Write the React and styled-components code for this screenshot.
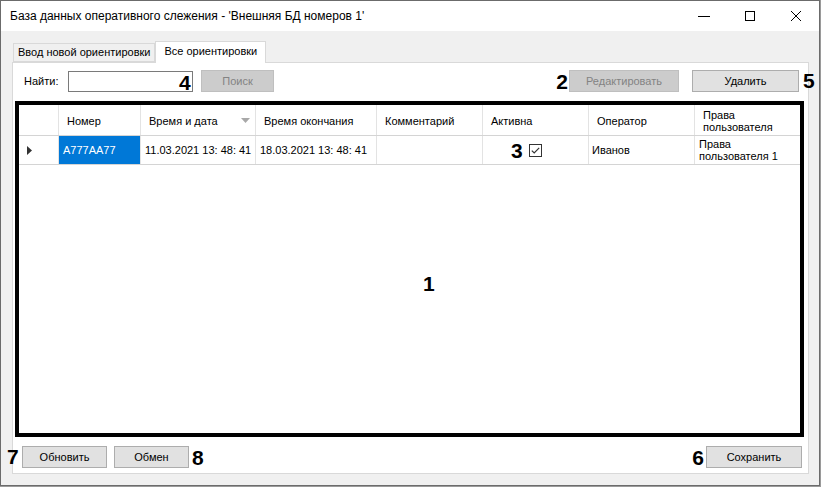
import React from "react";
import styled, { createGlobalStyle } from "styled-components";

const Global = createGlobalStyle`
  html, body { margin: 0; padding: 0; background: #9a9a9a; }
  body { font-family: "Liberation Sans", Arial, sans-serif; }
  * { box-sizing: border-box; }
`;

const Window = styled.div`
  width: 820px;
  height: 486px;
  border: 1px solid #6b6b6b;
  background: #f0f0f0;
  display: flex;
  flex-direction: column;
  position: relative;
`;

const TitleBar = styled.div`
  height: 30px;
  background: #ffffff;
  display: flex;
  align-items: center;
  padding-left: 9px;
  flex: none;
`;

const Title = styled.div`
  flex: 1;
  font-size: 12px;
  color: #000;
  margin-top: -1px;
`;

const Controls = styled.div`
  display: flex;
  height: 100%;
`;

const Ctrl = styled.div`
  width: 46px;
  height: 100%;
  display: flex;
  align-items: center;
  justify-content: center;
  padding-bottom: 1px;
`;

const Body = styled.div`
  flex: 1;
  padding: 10px 10px 11px 11px;
  display: flex;
  flex-direction: column;
`;

const TabStrip = styled.div`
  display: flex;
  align-items: flex-end;
  height: 21px;
  padding-left: 1px;
  position: relative;
  z-index: 2;
`;

const Tab = styled.div`
  height: ${(p) => (p.$active ? "22px" : "19px")};
  margin-bottom: ${(p) => (p.$active ? "-1px" : "0")};
  padding: 0 ${(p) => (p.$active ? "8px" : "4px")};
  border: 1px solid #d9d9d9;
  border-bottom: ${(p) => (p.$active ? "none" : "1px solid #d9d9d9")};
  background: ${(p) => (p.$active ? "#ffffff" : "#f0f0f0")};
  font-size: 11px;
  display: flex;
  align-items: center;
  color: #000;
  padding-bottom: ${(p) => (p.$active ? "3px" : "1px")};
`;

const Panel = styled.div`
  flex: 1;
  background: #ffffff;
  border: 1px solid #d9d9d9;
  display: flex;
  flex-direction: column;
  position: relative;
  z-index: 1;
`;

const TopRow = styled.div`
  display: flex;
  align-items: center;
  height: 22px;
  margin-top: 7px;
  padding: 0 9px 0 11px;
`;

const Label = styled.div`
  width: 44px;
  font-size: 11px;
  color: #000;
`;

const Anchor = styled.div`
  position: relative;
  display: flex;
`;

const Input = styled.div`
  width: 125px;
  height: 21px;
  border: 1px solid #7a7a7a;
  background: #fff;
`;

const Button = styled.div`
  width: ${(p) => p.$w}px;
  height: 22px;
  margin-left: ${(p) => p.$ml || 0}px;
  border: 1px solid ${(p) => (p.$disabled ? "#bfbfbf" : "#adadad")};
  background: ${(p) => (p.$disabled ? "#cccccc" : "#e1e1e1")};
  color: ${(p) => (p.$disabled ? "#838383" : "#000")};
  font-size: 11px;
  display: flex;
  align-items: center;
  justify-content: center;
`;

const Spacer = styled.div`
  flex: 1;
`;

const Num = styled.span`
  font-family: "Liberation Sans", Arial, sans-serif;
  font-weight: bold;
  font-size: 21px;
  line-height: 1;
  color: #000;
`;

const FloatNum = styled(Num)`
  position: absolute;
  top: ${(p) => p.$top}px;
  left: ${(p) => p.$left}px;
`;

const InlineNum = styled(Num)`
  margin-right: ${(p) => p.$mr || 0}px;
  margin-left: ${(p) => p.$ml || 0}px;
`;

const Grid = styled.div`
  margin: 9px 4px 0 2px;
  height: 336px;
  border: 4px solid #000;
  background: #fff;
  position: relative;
  display: flex;
  flex-direction: column;
`;

const cols = [40, 82, 115, 121, 106, 106, 106, 104];

const Row = styled.div`
  display: grid;
  grid-template-columns: ${cols.map((c) => c + "px").join(" ")};
  height: ${(p) => p.$h}px;
  border-bottom: 1px solid ${(p) => p.$line};
`;

const HeadCell = styled.div`
  border-right: 1px solid #e3e3e3;
  font-size: 11px;
  color: #000;
  display: flex;
  align-items: center;
  padding-left: 8px;
  padding-top: 2px;
  line-height: 12px;
  position: relative;
`;

const Cell = styled.div`
  border-right: 1px solid #e3e3e3;
  font-size: 11px;
  line-height: 12px;
  display: flex;
  align-items: center;
  justify-content: ${(p) => (p.$center ? "center" : "flex-start")};
  padding-left: ${(p) => (p.$center ? 0 : p.$pl ?? 4)}px;
  background: ${(p) => (p.$sel ? "#0078d7" : "#fff")};
  color: ${(p) => (p.$sel ? "#fff" : "#000")};
  position: relative;
`;

const SortArrow = styled.svg`
  position: absolute;
  right: 5px;
  top: 13px;
`;

const BottomRow = styled.div`
  display: flex;
  align-items: center;
  height: 22px;
  margin-top: 9px;
  padding: 0 6px 0 9px;
`;

const CheckBox = () => (
  <svg width="13" height="13" viewBox="0 0 13 13">
    <rect x="0.5" y="0.5" width="12" height="12" fill="#fff" stroke="#333" />
    <path d="M2.8 6.6 L5.2 9 L10.2 3.8" fill="none" stroke="#333" strokeWidth="1.2" />
  </svg>
);

export default function App() {
  return (
    <>
      <Global />
      <Window>
        <TitleBar>
          <Title>База данных оперативного слежения - 'Внешняя БД номеров 1'</Title>
          <Controls>
            <Ctrl>
              <svg width="12" height="12" viewBox="0 0 12 12">
                <path d="M0 6.5 H12" stroke="#000" strokeWidth="1" />
              </svg>
            </Ctrl>
            <Ctrl>
              <svg width="12" height="12" viewBox="0 0 12 12">
                <rect x="1.5" y="1.5" width="9" height="9" fill="none" stroke="#000" />
              </svg>
            </Ctrl>
            <Ctrl>
              <svg width="12" height="12" viewBox="0 0 12 12">
                <path d="M1 1 L11 11 M11 1 L1 11" stroke="#000" strokeWidth="1" />
              </svg>
            </Ctrl>
          </Controls>
        </TitleBar>
        <Body>
          <TabStrip>
            <Tab>Ввод новой ориентировки</Tab>
            <Tab $active>Все ориентировки</Tab>
          </TabStrip>
          <Panel>
            <TopRow>
              <Label>Найти:</Label>
              <Anchor>
                <Input />
                <FloatNum $top={1} $left={111}>4</FloatNum>
              </Anchor>
              <Button $w={73} $ml={8} $disabled>Поиск</Button>
              <Spacer />
              <InlineNum $mr={1}>2</InlineNum>
              <Button $w={110} $disabled>Редактировать</Button>
              <Anchor>
                <Button $w={107} $ml={13}>Удалить</Button>
                <FloatNum $top={0} $left={124}>5</FloatNum>
              </Anchor>
            </TopRow>
            <Grid>
              <Row $h={31} $line="#d4d4d4">
                <HeadCell />
                <HeadCell>Номер</HeadCell>
                <HeadCell>
                  Время и дата
                  <SortArrow width="9" height="5" viewBox="0 0 9 5">
                    <path d="M0 0 H9 L4.5 5 Z" fill="#a8a8a8" />
                  </SortArrow>
                </HeadCell>
                <HeadCell>Время окончания</HeadCell>
                <HeadCell>Комментарий</HeadCell>
                <HeadCell>Активна</HeadCell>
                <HeadCell>Оператор</HeadCell>
                <HeadCell style={{ borderRight: "none" }}>
                  Права
                  <br />
                  пользователя
                </HeadCell>
              </Row>
              <Row $h={29} $line="#d4d4d4">
                <Cell $pl={8}>
                  <svg width="5" height="9" viewBox="0 0 5 9">
                    <path d="M0 0 L5 4.5 L0 9 Z" fill="#333" />
                  </svg>
                </Cell>
                <Cell $sel>A777AA77</Cell>
                <Cell>11.03.2021 13: 48: 41</Cell>
                <Cell>18.03.2021 13: 48: 41</Cell>
                <Cell />
                <Cell $center>
                  <Anchor>
                    <FloatNum $top={-4} $left={-18}>3</FloatNum>
                    <CheckBox />
                  </Anchor>
                </Cell>
                <Cell $pl={3}>Иванов</Cell>
                <Cell style={{ borderRight: "none" }}>
                  Права
                  <br />
                  пользователя 1
                </Cell>
              </Row>
              <FloatNum $top={168} $left={404}>1</FloatNum>
            </Grid>
            <BottomRow>
              <Anchor>
                <FloatNum $top={0} $left={-15}>7</FloatNum>
                <Button $w={85}>Обновить</Button>
              </Anchor>
              <Button $w={75} $ml={7}>Обмен</Button>
              <InlineNum $ml={3}>8</InlineNum>
              <Spacer />
              <InlineNum $mr={2}>6</InlineNum>
              <Button $w={96}>Сохранить</Button>
            </BottomRow>
          </Panel>
        </Body>
      </Window>
    </>
  );
}
